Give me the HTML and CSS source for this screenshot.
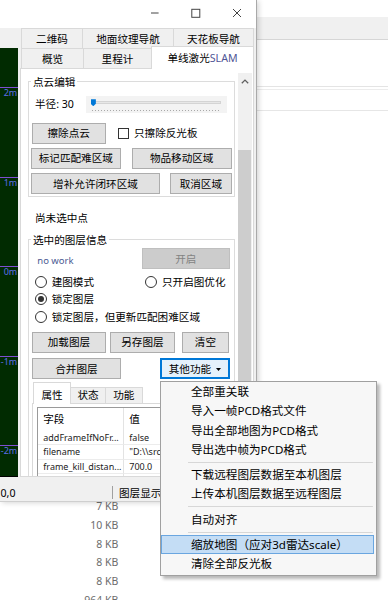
FILE: index.html
```html
<!DOCTYPE html>
<html lang="zh-CN">
<head>
<meta charset="utf-8">
<title>单线激光SLAM</title>
<link rel="stylesheet" href="styles.css">
</head>
<body>
<div class="desktop">
  <div class="bg-window">
    <div class="bg-band"></div>
    <div class="bg-line bg-line-1"></div>
    <div class="bg-line bg-line-2"></div>
    <div class="bg-line bg-line-3"></div>
    <div class="file-list">
      <div class="file-row">7 KB</div>
      <div class="file-row">10 KB</div>
      <div class="file-row">8 KB</div>
      <div class="file-row">8 KB</div>
      <div class="file-row">8 KB</div>
      <div class="file-row">964 KB</div>
    </div>
  </div>

  <div class="main-window">
    <div class="titlebar">
      <span class="caption-btn cap-min"><svg width="10" height="10" viewBox="0 0 10 10"><path d="M1 5H8.6" stroke="#444" stroke-width="1"/></svg></span>
      <span class="caption-btn cap-max"><svg width="10" height="10" viewBox="0 0 10 10"><rect x="0.8" y="1.3" width="8" height="8" fill="none" stroke="#444" stroke-width="1"/></svg></span>
      <span class="caption-btn cap-close"><svg width="10" height="10" viewBox="0 0 10 10"><path d="M1 1L9 9M9 1L1 9" stroke="#444" stroke-width="1" fill="none"/></svg></span>
    </div>
    <div class="client">
      <div class="workarea">
        <div class="canvas-col">
          <div class="canvas">
            <div class="axis-mark"><span class="axis-label">2m</span></div>
            <div class="axis-mark"><span class="axis-label">1m</span></div>
            <div class="axis-mark"><span class="axis-label">0m</span></div>
            <div class="axis-mark"><span class="axis-label">-1m</span></div>
            <div class="axis-mark"><span class="axis-label">-2m</span></div>
          </div>
        </div>
        <div class="tabctl">
          <div class="tabrow">
            <div class="tab tab-qr">二维码</div>
            <div class="tab tab-ground">地面纹理导航</div>
            <div class="tab tab-ceiling">天花板导航</div>
          </div>
          <div class="tabrow">
            <div class="tab tab-overview">概览</div>
            <div class="tab tab-odo">里程计</div>
            <div class="tab tab-active">单线激光<span class="tint">SLAM</span></div>
          </div>
          <div class="tabpage">
            <div class="scrollarea">
              <fieldset class="group group-edit">
                <legend>点云编辑</legend>
                <div class="row slider-row">
                  <span class="radius-label">半径: 30</span>
                  <div class="slider">
                    <div class="slider-track"></div>
                    <div class="slider-ticks"></div>
                    <div class="slider-thumb"></div>
                  </div>
                </div>
                <div class="row edit-row-1">
                  <div class="btn b-erase">擦除点云</div>
                  <label class="check">
                    <span class="check-box"></span>
                    <span class="check-label">只擦除反光板</span>
                  </label>
                </div>
                <div class="row edit-row-2">
                  <div class="btn b-mark">标记匹配难区域</div>
                  <div class="btn b-move">物品移动区域</div>
                </div>
                <div class="row edit-row-3">
                  <div class="btn b-loop">增补允许闭环区域</div>
                  <div class="btn b-cancel">取消区域</div>
                </div>
              </fieldset>

              <div class="hint">尚未选中点</div>

              <fieldset class="group group-layer">
                <legend>选中的图层信息</legend>
                <div class="row layer-row-a">
                  <span class="nowork">no work</span>
                  <div class="btn btn-disabled b-open">开启</div>
                </div>
                <div class="row radio-row radio-row-first">
                  <div class="radio-item col-1"><span class="radio-circle"></span><span>建图模式</span></div>
                  <div class="radio-item"><span class="radio-circle"></span><span>只开启图优化</span></div>
                </div>
                <div class="row radio-row">
                  <div class="radio-item col-1"><span class="radio-circle"><span class="radio-dot"></span></span><span>锁定图层</span></div>
                </div>
                <div class="row radio-row">
                  <div class="radio-item"><span class="radio-circle"></span><span>锁定图层，但更新匹配困难区域</span></div>
                </div>
                <div class="row layer-btns-1">
                  <div class="btn b-load">加载图层</div>
                  <div class="btn b-saveas">另存图层</div>
                  <div class="btn b-clear">清空</div>
                </div>
                <div class="row layer-btns-2">
                  <div class="btn b-merge">合并图层</div>
                  <div class="btn btn-focus b-more">其他功能<svg class="caret" width="5" height="3" viewBox="0 0 5 3"><path d="M0 0H5L2.5 3Z" fill="#000"/></svg></div>
                </div>
                <div class="subtabs">
                  <div class="subtab subtab-active st-prop">属性</div>
                  <div class="subtab st-state">状态</div>
                  <div class="subtab st-func">功能</div>
                </div>
                <div class="subpage">
                  <div class="grid">
                    <div class="th th-1">字段</div>
                    <div class="th">值</div>
                    <div class="td td-1">addFrameIfNoFr...</div>
                    <div class="td">false</div>
                    <div class="td td-1">filename</div>
                    <div class="td">"D:\\src\\maps\\map.pcd"</div>
                    <div class="td td-1">frame_kill_distan...</div>
                    <div class="td">700.0</div>
                    <div class="td td-1">frame_kill_count</div>
                    <div class="td">3</div>
                  </div>
                </div>
              </fieldset>
            </div>
            <div class="vscroll">
              <div class="vs-arrow"><svg width="8" height="5" viewBox="0 0 8 5"><path d="M0.8 4.3L4 1.1L7.2 4.3" fill="none" stroke="#606060" stroke-width="1.3"/></svg></div>
              <div class="vs-thumb"></div>
            </div>
          </div>
        </div>
      </div>
      <div class="statusbar">
        <span class="status-pos">0,0</span>
        <span class="status-sep"></span>
        <span class="status-layer">图层显示：全部图层</span>
      </div>
    </div>
  </div>

  <div class="menu">
    <div class="menu-item">全部重关联</div>
    <div class="menu-item">导入一帧PCD格式文件</div>
    <div class="menu-item">导出全部地图为PCD格式</div>
    <div class="menu-item">导出选中帧为PCD格式</div>
    <div class="menu-sep"></div>
    <div class="menu-item">下载远程图层数据至本机图层</div>
    <div class="menu-item">上传本机图层数据至远程图层</div>
    <div class="menu-sep"></div>
    <div class="menu-item">自动对齐</div>
    <div class="menu-sep"></div>
    <div class="menu-item menu-hover">缩放地图（应对3d雷达scale）</div>
    <div class="menu-item">清除全部反光板</div>
  </div>
</div>
</body>
</html>
```

FILE: styles.css
```css
* { box-sizing: border-box; margin: 0; padding: 0; }
html, body { width: 388px; height: 600px; overflow: hidden; background: #fff; }
body {
  font-family: "Noto Sans", "Noto Sans CJK SC", sans-serif;
  font-size: 10.6px;
  line-height: 14px;
  color: #000;
}
.desktop { position: relative; width: 388px; height: 600px; overflow: hidden; }

/* background window */
.bg-window { display: flex; flex-direction: column; height: 600px; background: #fff; }
.bg-band { flex: none; margin-top: 17px; height: 23px; background: #f0f0f0; border-bottom: 1px solid #d6d6d6; }
.bg-line { flex: none; height: 1px; }
.bg-line-1 { margin-top: 46px; background: #e4e4e4; }
.bg-line-2 { margin-top: 2px; background: #ececec; }
.bg-line-3 { margin-top: 20px; background: #e6e6e6; }
.file-list { flex: none; margin-top: 386.35px; display: flex; flex-direction: column; }
.file-row {
  flex: none; width: 118.3px; height: 18.7px; line-height: 18.7px;
  text-align: right; font-size: 10.5px; color: #6d6d6d; white-space: nowrap;
}

/* main window */
.main-window {
  position: absolute; left: 0; top: 0; width: 257px; height: 502px;
  display: flex; flex-direction: column;
  background: #f0f0f0;
  border-right: 1px solid #a9a9a9; border-bottom: 1px solid #cfcfcf;
  box-shadow: 2px 1px 5px rgba(0, 0, 0, .16);
}
.titlebar { flex: none; height: 28px; background: #fff; display: flex; justify-content: flex-end; align-items: flex-start; }
.caption-btn { height: 28px; display: flex; justify-content: center; padding-top: 7.5px; }
.caption-btn svg { display: block; }
.cap-min { width: 40px; }
.cap-max { width: 42px; }
.cap-close { width: 38.6px; }

.client { flex: 1; display: flex; flex-direction: column; }
.workarea { flex: none; height: 449px; display: flex; }

.canvas-col { flex: none; width: 18.3px; padding-top: 20px; }
.canvas {
  height: 428.7px; background: #012b01; border-bottom: 1px solid #000;
  padding-top: 39px; display: flex; flex-direction: column; overflow: hidden;
}
.axis-mark { flex: none; height: 89.5px; border-top: 1px solid #7e4fd0; }
.axis-label {
  display: block; text-align: right; padding-right: 1px;
  font-size: 9px; line-height: 9px; color: #5e6ee6; white-space: nowrap;
}

/* tab control */
.tabctl { flex: none; width: 234px; margin-left: 1.7px; display: flex; flex-direction: column; }
.tabrow { flex: none; height: 20px; display: flex; padding-left: 1px; }
.tab {
  flex: none; height: 20px; margin-right: -1px;
  border: 1px solid #d9d9d9; border-bottom: none;
  background: #f0f0f0; text-align: center; padding-top: 3px; white-space: nowrap;
}
.tab-qr { width: 62px; }
.tab-ground { width: 92px; }
.tab-ceiling { width: 81px; }
.tab-overview { width: 63px; }
.tab-odo { width: 69px; }
.tab-active {
  width: 103px; height: 23px; margin-top: -2px; padding-top: 4px;
  background: #fff; position: relative; z-index: 1;
}
.tint { color: #4f5596; }

.tabpage {
  flex: 1; background: #fff; border: 1px solid #d9d9d9;
  display: flex; padding: 4px 1px 0 0; overflow: hidden;
}
.scrollarea { flex: 1; min-width: 0; overflow: hidden; padding: 0 2.7px 0 7px; }

.vscroll { flex: none; width: 14.3px; background: #f0f0f0; display: flex; flex-direction: column; }
.vs-arrow { flex: none; height: 17px; display: flex; align-items: center; justify-content: center; }
.vs-arrow svg { display: block; }
.vs-thumb { flex: none; margin: 59.7px 1px 0 0.5px; height: 330px; background: #cdcdcd; }

/* group boxes */
.group { display: block; min-width: 0; border: 1px solid #dcdcdc; padding: 0 2px 2px; }
.group legend { padding: 0 2px; line-height: 14px; font-size: 10.6px; }
.group-edit { margin-top: 1.7px; }
.group-layer { margin-top: 7.7px; }

.row { display: flex; align-items: center; }

.slider-row { margin-top: 7px; height: 17.5px; }
.radius-label { flex: none; margin-left: 4px; width: 51px; white-space: nowrap; }
.slider { flex: none; width: 140.7px; height: 17.5px; background: #f3f3f3; position: relative; }
.slider-track {
  position: absolute; left: 5.7px; right: 5.7px; top: 5px; height: 3.5px;
  background: #e7e7e7; border: 1px solid #d4d4d4;
}
.slider-ticks {
  position: absolute; left: 6.5px; right: 6.5px; top: 14px; height: 1.5px;
  background: repeating-linear-gradient(to right, #a8a8a8 0 1px, transparent 1px 3px);
}
.slider-thumb {
  position: absolute; left: 4.7px; top: 3.5px; width: 5.2px; height: 7px;
  background: #0078d7; clip-path: polygon(0 0, 100% 0, 100% 65%, 50% 100%, 0 65%);
}

.btn {
  flex: none; height: 21px; border: 1px solid #adadad; background: #e1e1e1;
  display: flex; align-items: center; justify-content: center; white-space: nowrap;
}
.btn-disabled { background: #cccccc; border-color: #bfbfbf; color: #838383; }
.btn-focus { border-color: #0078d7; box-shadow: inset 0 0 0 1px #0078d7; background: #e5f1fb; }
.caret { display: block; margin-left: 5px; margin-top: 1px; }

.edit-row-1 { margin-top: 9.4px; }
.edit-row-2 { margin-top: 4px; }
.edit-row-3 { margin-top: 4.6px; }
.b-erase { width: 74px; margin-left: 0.7px; }
.b-mark { width: 89.7px; }
.b-move { width: 100px; margin-left: 11px; }
.b-loop { width: 129px; }
.b-cancel { width: 61.7px; margin-left: 10px; }

.check { display: flex; align-items: center; margin-left: 12.6px; }
.check-box { flex: none; width: 11px; height: 11px; border: 1px solid #333; background: #fff; }
.check-label { margin-left: 4.7px; white-space: nowrap; }

.hint { margin-top: 14px; margin-left: 7px; white-space: nowrap; }

.layer-row-a { margin-top: 1.3px; height: 21px; }
.nowork { margin-left: 6.3px; margin-top: 4.4px; font-size: 9.5px; line-height: 12px; color: #4b5a92; white-space: nowrap; }
.b-open { width: 88.3px; margin-left: auto; margin-right: 2px; }

.radio-row { height: 17.5px; }
.radio-row-first { margin-top: 3.7px; }
.radio-item { display: flex; align-items: center; white-space: nowrap; margin-left: 3.7px; }
.radio-item.col-1 { width: 110.3px; flex: none; }
.radio-item.col-1 + .radio-item { margin-left: 0; }
.radio-circle {
  flex: none; width: 12px; height: 12px; border: 1px solid #333; border-radius: 50%;
  background: #fff; margin-right: 5px; display: flex; align-items: center; justify-content: center;
}
.radio-dot { width: 6px; height: 6px; border-radius: 50%; background: #333; }

.layer-btns-1 { margin-top: 6.2px; }
.layer-btns-2 { margin-top: 5.6px; }
.b-load { width: 73.4px; margin-left: 1.3px; }
.b-saveas { width: 65px; margin-left: 4.3px; }
.b-clear { width: 47.6px; margin-left: 6.7px; }
.b-merge { width: 88.4px; margin-left: 1.3px; }
.b-more { width: 70px; margin-left: 39.3px; }

/* inner tabs */
.subtabs { margin-top: 2.4px; margin-left: 1px; height: 21.3px; display: flex; align-items: flex-end; padding-left: 1px; }
.subtab {
  flex: none; height: 16.3px; margin-right: -1px;
  border: 1px solid #d9d9d9; border-bottom: none; background: #f0f0f0;
  display: flex; align-items: flex-end; justify-content: center; padding-bottom: 1px; white-space: nowrap;
}
.subtab-active { height: 22.3px; margin-bottom: -1px; background: #fff; position: relative; z-index: 1; padding-bottom: 2px; }
.st-prop { width: 38px; }
.st-state { width: 36px; }
.st-func { width: 37.7px; }

.subpage { margin-left: 1px; height: 110px; border: 1px solid #d9d9d9; background: #fff; padding: 3px 3px 0 3.7px; }
.grid { display: grid; grid-template-columns: 86.3px 1fr; border: 1px solid #9a9a9a; }
.th { height: 23px; line-height: 22px; padding-left: 5.3px; white-space: nowrap; }
.th-1 { padding-left: 5.6px; border-right: 1px solid #e3e3e3; }
.td {
  height: 14.5px; line-height: 14px; font-size: 9px; color: #222;
  padding-left: 5.3px; border-bottom: 1px solid #ececec; white-space: nowrap; overflow: hidden;
}
.td-1 { padding-left: 5.6px; border-right: 1px solid #e3e3e3; }

/* status bar */
.statusbar { flex: none; height: 24px; display: flex; align-items: center; padding-top: 7px; background: #f0f0f0; }
.status-pos { flex: none; width: 112.3px; padding-left: 0.5px; white-space: nowrap; }
.status-sep { flex: none; width: 1px; height: 13px; background: #a0a0a0; }
.status-layer { margin-left: 5.7px; white-space: nowrap; }

/* context menu */
.menu {
  position: absolute; left: 160px; top: 381px; width: 217px; z-index: 5;
  padding: 0 0 1px; background: #f7f7f7; border: 1px solid #a0a0a0;
  box-shadow: 3px 3px 3px rgba(0, 0, 0, .28);
  font-size: 11.6px;
}
.menu-item { height: 19.3px; line-height: 19.3px; padding-left: 30px; margin-right: 2px; white-space: nowrap; }
.menu-hover { background: #c4ddf5; box-shadow: inset 0 0 0 1px #6aa6e0; }
.menu-sep {
  height: 6px; margin: 0 3px 0 27.3px;
  background: linear-gradient(#d7d7d7, #d7d7d7) center / 100% 1px no-repeat;
}
```
